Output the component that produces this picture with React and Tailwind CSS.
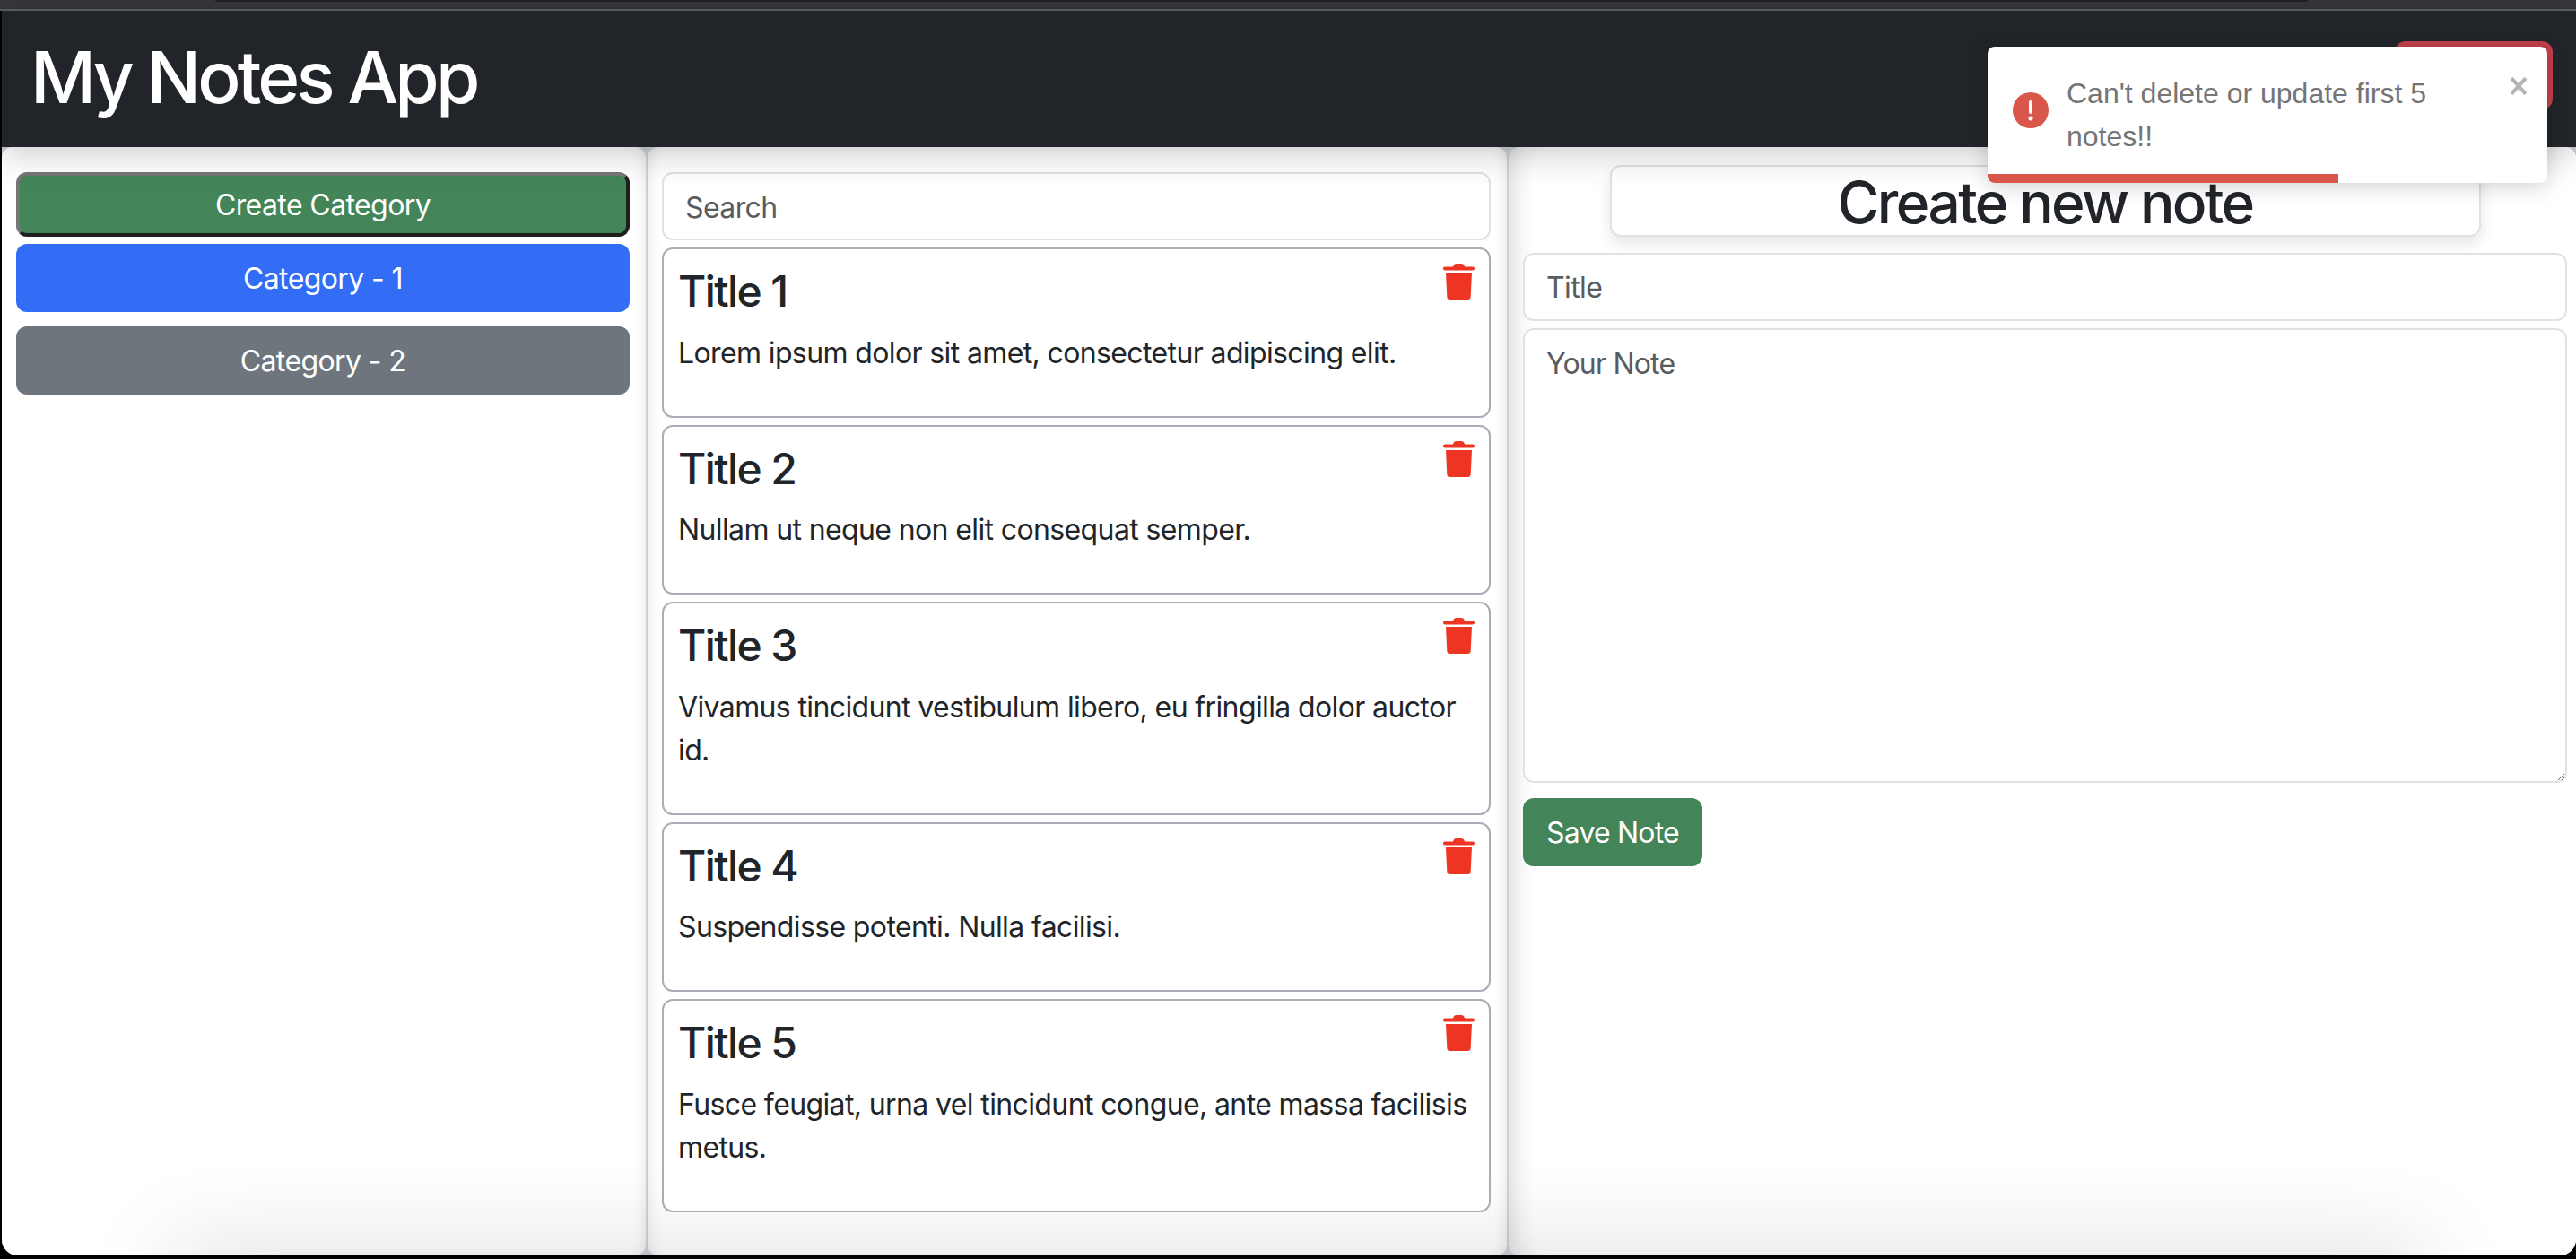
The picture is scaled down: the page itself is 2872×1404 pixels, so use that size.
const notes = [
  { title: 'Title 1', body: 'Lorem ipsum dolor sit amet, consectetur adipiscing elit.' },
  { title: 'Title 2', body: 'Nullam ut neque non elit consequat semper.' },
  { title: 'Title 3', body: 'Vivamus tincidunt vestibulum libero, eu fringilla dolor auctor id.' },
  { title: 'Title 4', body: 'Suspendisse potenti. Nulla facilisi.' },
  { title: 'Title 5', body: 'Fusce feugiat, urna vel tincidunt congue, ante massa facilisis metus.' },
]

function TrashIcon() {
  return (
    <svg viewBox="0 0 35 40" className="w-[35px] h-[40px]" fill="#ee3524">
      <path d="M11 3.500C11.500 1 13 0 15 0h5c2 0 3.500 1 4 3.500h9c1.200 0 2 .8 2 2s-.8 2-2 2H2c-1.200 0-2-.8-2-2s.8-2 2-2z" />
      <path d="M3 10h29l-1.300 27c-.1 1.800-1.300 3-3 3H7.300c-1.700 0-2.900-1.200-3-3z" />
    </svg>
  )
}

function NoteCard({ title, body }) {
  return (
    <div className="relative z-20 border-2 border-[#a9adb7] rounded-xl px-4 pt-[18px] pb-[14px] bg-white">
      <h4 className="text-[48px] leading-[1.2] font-medium tracking-[-1.6px] mb-4 text-[#212529]">{title}</h4>
      <p className="text-[32px] leading-[48px] tracking-[-0.62px] mb-8 text-[#212529]">{body}</p>
      <div className="absolute top-[16px] right-[16px]">
        <TrashIcon />
      </div>
    </div>
  )
}

function ErrorToast() {
  return (
    <div className="absolute top-[52px] right-[32px] z-30 w-[624px] h-[152px] bg-white rounded-lg overflow-hidden shadow-[0_4px_24px_rgba(0,0,0,0.18)]">
      <div className="flex items-center h-[142px] pl-[28px]">
        <svg viewBox="0 0 40 40" className="w-[40px] h-[40px] shrink-0">
          <circle cx="20" cy="20" r="20" fill="#d9574a" />
          <rect x="18" y="9" width="4" height="15" rx="2" fill="#fff" />
          <circle cx="20" cy="29" r="2.500" fill="#fff" />
        </svg>
        <p className="ml-[20px] mt-[10px] w-[470px] font-['Liberation_Sans',sans-serif] tracking-normal text-[32px] leading-[48px] text-[#757575]">Can't delete or update first 5 notes!!</p>
      </div>
      <svg viewBox="0 0 20 20" className="absolute top-[33px] right-[22px] w-[20px] h-[22px]" stroke="#b4b4b4" strokeWidth="4" preserveAspectRatio="none">
        <path d="M2 2l16 16M18 2L2 18" />
      </svg>
      <div className="h-[10px] w-[391px] bg-[#d9574a]" />
    </div>
  )
}

export default function App() {
  return (
    <div className="relative w-[2872px] h-[1404px] overflow-hidden bg-black font-['Inter',sans-serif] tracking-[-0.6px] flex flex-col">
      <div className="h-[10px] bg-[#36373b] shrink-0">
        <div className="ml-[240px] w-[2333px] h-[2px] bg-[#1e1f22] rounded-b" />
      </div>
      <div className="h-[2px] bg-[#5d5e62] shrink-0" />
      <header className="relative z-10 h-[152px] ml-[2px] shrink-0 bg-[#212529] flex items-center justify-between pl-[32px] pr-[26px] shadow-[0_8px_36px_rgba(0,0,0,0.2)]">
        <h1 className="text-[80px] leading-[1.2] font-medium tracking-[-3.8px] text-white -mt-[4px]">My Notes App</h1>
        <button className="w-[176px] h-[76px] rounded-xl bg-[#c2404a] text-white text-[32px] -mt-[8px]">Logout</button>
      </header>

      <main className="relative flex-1 min-h-0 ml-[2px] mb-[4px] flex bg-[#cdd0d6] gap-[2px] rounded-bl-[18px] rounded-br-[18px] overflow-hidden">
        <aside className="w-[718px] shrink-0 bg-white rounded-xl pl-4 pr-[18px] pt-[28px] flex flex-col items-stretch shadow-[inset_-10px_0_16px_-10px_rgba(0,0,0,0.12)]">
          <button className="h-[72px] pt-[2px] bg-[#438559] border-4 border-t-[#767676] border-l-[#767676] border-r-[#1f1f1f] border-b-[#1f1f1f] rounded-xl text-white text-[32px]">Create Category</button>
          <button className="h-[76px] pt-[2px] mt-2 bg-[#336cf5] rounded-xl text-white text-[32px]">Category - 1</button>
          <button className="h-[76px] pt-[2px] mt-4 bg-[#6e757c] rounded-xl text-white text-[32px]">Category - 2</button>
        </aside>

        <section className="w-[958px] shrink-0 bg-white rounded-xl pl-4 pr-[18px] pt-[28px] flex flex-col gap-2 shadow-[inset_10px_0_16px_-10px_rgba(0,0,0,0.12),inset_-10px_0_16px_-10px_rgba(0,0,0,0.12)]">
          <input className="h-[76px] shrink-0 border-2 border-[#dee2e6] rounded-xl px-6 pt-[2px] text-[32px] placeholder:text-[#595c5f] outline-none bg-white" placeholder="Search" />
          {notes.map((note) => (
            <NoteCard key={note.title} title={note.title} body={note.body} />
          ))}
        </section>

        <section className="flex-1 min-w-0 bg-white rounded-xl pl-4 pr-[10px] pt-[20px] flex flex-col shadow-[inset_24px_0_28px_-20px_rgba(0,0,0,0.16)]">
          <h2 className="self-center w-[971px] h-[80px] pt-[2px] border-2 border-[#dee2e6] rounded-xl text-center text-[64px] leading-[1.2] font-medium tracking-[-2.6px] text-[#212529] bg-white shadow-[0_8px_16px_rgba(0,0,0,0.1)]">Create new note</h2>
          <input className="mt-[18px] h-[76px] shrink-0 border-2 border-[#dee2e6] rounded-xl px-6 text-[32px] placeholder:text-[#595c5f] outline-none bg-white" placeholder="Title" />
          <textarea className="mt-2 h-[507px] shrink-0 border-2 border-[#dee2e6] rounded-xl px-6 pt-[14px] pb-3 text-[32px] leading-[48px] tracking-[-0.8px] placeholder:text-[#595c5f] outline-none bg-white" placeholder="Your Note" />
          <button className="mt-[17px] self-start w-[200px] h-[76px] pt-[2px] rounded-xl bg-[#438559] text-white text-[32px] tracking-[-0.8px]">Save Note</button>
        </section>

        <div className="absolute z-10 left-[190px] right-[170px] top-full h-[40px] pointer-events-none shadow-[0_0_100px_rgba(0,0,0,0.22)]" />
      </main>

      <ErrorToast />
    </div>
  )
}
